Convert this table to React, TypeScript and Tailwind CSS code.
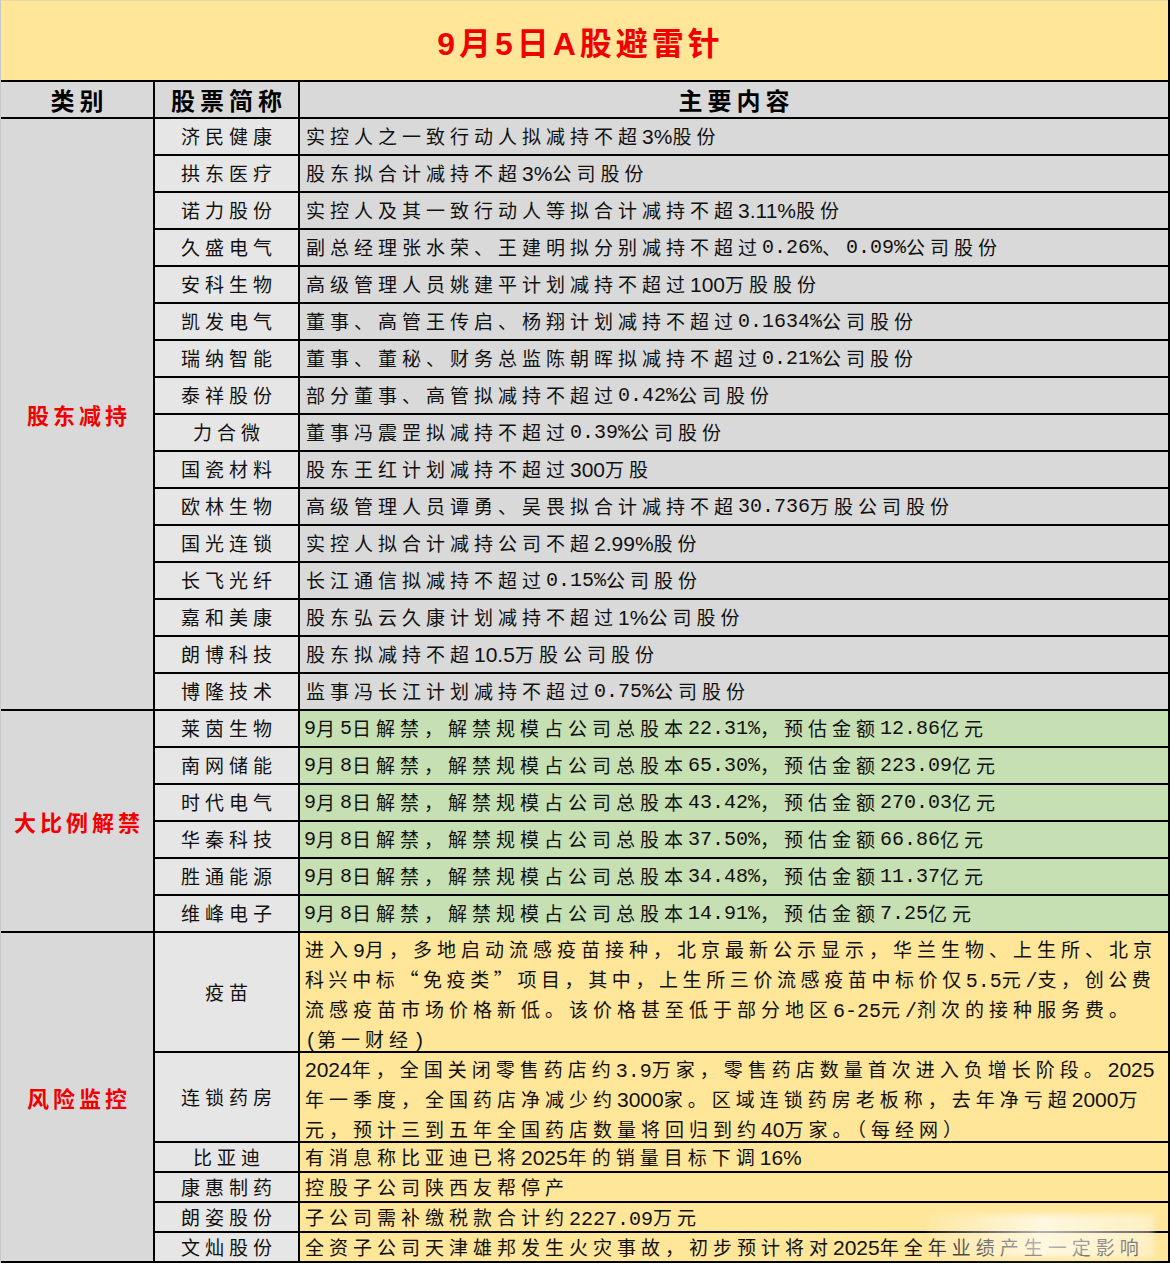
import React from 'react';

// ascii runs: narrow sans by default, mono (half-width look) when wide; {..} flips the style
function Txt({ t, wide = false }: { t: string; wide?: boolean }) {
    const chunks = t.split(/(\{[^}]*\})/);
    const out: React.ReactNode[] = [];
    chunks.forEach((c, ci) => {
        let w = wide;
        let s = c;
        if (c.startsWith('{') && c.endsWith('}')) {
            w = !wide;
            s = c.slice(1, -1);
        }
        s.split(/([\x20-\x7E]+)/).forEach((p, pi) => {
            if (!p) return;
            if (/^[\x20-\x7E]+$/.test(p)) {
                out.push(
                    <span
                        key={`${ci}-${pi}`}
                        className={
                            w
                                ? "font-['Liberation_Mono',monospace] text-[20px] tracking-normal"
                                : "font-['Liberation_Sans_Narrow','Liberation_Sans',sans-serif] text-[21px] tracking-normal"
                        }
                    >
                        {p}
                    </span>
                );
            } else {
                out.push(<span key={`${ci}-${pi}`}>{p}</span>);
            }
        });
    });
    return <>{out}</>;
}

const reduce: [string, string, boolean][] = [
    ['济民健康', '实控人之一致行动人拟减持不超3%股份', false],
    ['拱东医疗', '股东拟合计减持不超3%公司股份', false],
    ['诺力股份', '实控人及其一致行动人等拟合计减持不超3.11%股份', false],
    ['久盛电气', '副总经理张水荣、王建明拟分别减持不超过0.26%、0.09%公司股份', true],
    ['安科生物', '高级管理人员姚建平计划减持不超过100万股股份', false],
    ['凯发电气', '董事、高管王传启、杨翔计划减持不超过0.1634%公司股份', true],
    ['瑞纳智能', '董事、董秘、财务总监陈朝晖拟减持不超过0.21%公司股份', true],
    ['泰祥股份', '部分董事、高管拟减持不超过0.42%公司股份', true],
    ['力合微', '董事冯震罡拟减持不超过0.39%公司股份', true],
    ['国瓷材料', '股东王红计划减持不超过300万股', false],
    ['欧林生物', '高级管理人员谭勇、吴畏拟合计减持不超30.736万股公司股份', true],
    ['国光连锁', '实控人拟合计减持公司不超2.99%股份', false],
    ['长飞光纤', '长江通信拟减持不超过0.15%公司股份', true],
    ['嘉和美康', '股东弘云久康计划减持不超过1%公司股份', false],
    ['朗博科技', '股东拟减持不超10.5万股公司股份', false],
    ['博隆技术', '监事冯长江计划减持不超过0.75%公司股份', true],
];

const unlock: [string, string][] = [
    ['莱茵生物', '9月5日解禁，解禁规模占公司总股本22.31%，预估金额12.86亿元'],
    ['南网储能', '9月8日解禁，解禁规模占公司总股本65.30%，预估金额223.09亿元'],
    ['时代电气', '9月8日解禁，解禁规模占公司总股本43.42%，预估金额270.03亿元'],
    ['华秦科技', '9月8日解禁，解禁规模占公司总股本37.50%，预估金额66.86亿元'],
    ['胜通能源', '9月8日解禁，解禁规模占公司总股本34.48%，预估金额11.37亿元'],
    ['维峰电子', '9月8日解禁，解禁规模占公司总股本14.91%，预估金额7.25亿元'],
];

type Line = { t: string; tight?: boolean };

const risk: { name: string; lines: Line[]; h: string; wide: boolean }[] = [
    {
        name: '疫苗',
        h: 'h-[120px]',
        wide: true,
        lines: [
            { t: '进入9月，多地启动流感疫苗接种，北京最新公示显示，华兰生物、上生所、北京' },
            { t: '科兴中标“免疫类”项目，其中，上生所三价流感疫苗中标价仅5.5元/支，创公费', tight: true },
            { t: '流感疫苗市场价格新低。该价格甚至低于部分地区6-25元/剂次的接种服务费。' },
            { t: '(第一财经)' },
        ],
    },
    {
        name: '连锁药房',
        h: 'h-[90px]',
        wide: false,
        lines: [
            { t: '2024年，全国关闭零售药店约{3.9}万家，零售药店数量首次进入负增长阶段。2025' },
            { t: '年一季度，全国药店净减少约3000家。区域连锁药房老板称，去年净亏超2000万' },
            { t: '元，预计三到五年全国药店数量将回归到约40万家。（每经网）' },
        ],
    },
    { name: '比亚迪', h: 'h-[30px]', wide: false, lines: [{ t: '有消息称比亚迪已将2025年的销量目标下调16%' }] },
    { name: '康惠制药', h: 'h-[30px]', wide: false, lines: [{ t: '控股子公司陕西友帮停产' }] },
    { name: '朗姿股份', h: 'h-[30px]', wide: true, lines: [{ t: '子公司需补缴税款合计约2227.09万元' }] },
    { name: '文灿股份', h: 'h-[30px]', wide: false, lines: [{ t: '全资子公司天津雄邦发生火灾事故，初步预计将对2025年全年业绩产生一定影响' }] },
];

function Category({ label }: { label: string }) {
    return (
        <div className="w-[154px] shrink-0 border-r-2 border-b-2 border-black bg-[#D9D9D9] flex items-center justify-center">
            <span className="text-[22px] font-bold tracking-[4px] text-[#F00000] pl-[4px]">{label}</span>
        </div>
    );
}

export default function App() {
    return (
        <div className="w-[1170px] h-[1264px] bg-white overflow-hidden relative font-['Noto_Sans_CJK_SC',sans-serif] text-[19px] text-[#111]">
            <div className="w-[1170px] border-l border-[#c8c8c8] border-r-2 border-r-black">
                {/* title */}
                <div className="h-[82px] bg-[#FFE699] border-b-2 border-black border-t border-t-[#e8d9a0] flex items-center justify-center">
                    <span className="text-[32px] font-bold tracking-[4px] text-[#F00000] pt-[4px] mr-[8px]">
                        <span className="font-['Liberation_Sans',sans-serif]">9</span>月
                        <span className="font-['Liberation_Sans',sans-serif]">5</span>日
                        <span className="font-['Liberation_Sans',sans-serif]">A</span>股避雷针
                    </span>
                </div>

                {/* header */}
                <div className="h-[37px] flex border-b-2 border-black bg-[#D9D9D9] text-[24px] font-bold text-black">
                    <div className="w-[154px] shrink-0 border-r-2 border-black flex items-center justify-center tracking-[5px] pl-[5px]">类别</div>
                    <div className="w-[145px] shrink-0 border-r-2 border-black flex items-center justify-center tracking-[5px] pl-[5px]">股票简称</div>
                    <div className="flex-1 flex items-center justify-center tracking-[5px] pl-[5px]">主要内容</div>
                </div>

                {/* 股东减持 */}
                <div className="flex">
                    <Category label="股东减持" />
                    <div className="flex-1 flex flex-col">
                        {reduce.map(([name, text, wide]) => (
                            <div key={name} className="h-[37px] flex border-b-2 border-black">
                                <div className="w-[145px] shrink-0 border-r-2 border-black bg-[#E7E6E6] flex items-center justify-center tracking-[5px] pl-[5px]">
                                    {name}
                                </div>
                                <div className="flex-1 bg-[#D9D9D9] flex items-center pl-[6px] tracking-[5px] whitespace-nowrap overflow-hidden">
                                    <Txt t={text} wide={wide} />
                                </div>
                            </div>
                        ))}
                    </div>
                </div>

                {/* 大比例解禁 */}
                <div className="flex">
                    <Category label="大比例解禁" />
                    <div className="flex-1 flex flex-col">
                        {unlock.map(([name, text]) => (
                            <div key={name} className="h-[37px] flex border-b-2 border-black">
                                <div className="w-[145px] shrink-0 border-r-2 border-black bg-[#E7E6E6] flex items-center justify-center tracking-[5px] pl-[5px]">
                                    {name}
                                </div>
                                <div className="flex-1 bg-[#C6E0B4] flex items-center pl-[4px] tracking-[5px] whitespace-nowrap overflow-hidden">
                                    <Txt t={text} wide />
                                </div>
                            </div>
                        ))}
                    </div>
                </div>

                {/* 风险监控 */}
                <div className="flex">
                    <Category label="风险监控" />
                    <div className="flex-1 flex flex-col">
                        {risk.map(r => (
                            <div key={r.name} className={`${r.h} flex border-b-2 border-black`}>
                                <div className="w-[145px] shrink-0 border-r-2 border-black bg-[#E7E6E6] flex items-center justify-center tracking-[5px] pl-[5px]">
                                    {r.name}
                                </div>
                                <div className={`flex-1 bg-[#FFE699] flex flex-col pl-[5px] whitespace-nowrap ${r.lines.length > 1 ? 'pt-[1px]' : ''}`}>
                                    {r.lines.map((l, i) => (
                                        <div
                                            key={i}
                                            className={`${r.lines.length > 1 ? 'h-[30px] leading-[30px]' : 'h-[28px] leading-[28px]'} shrink-0 ${l.tight ? 'tracking-[4.6px]' : 'tracking-[5px]'}`}
                                        >
                                            <Txt t={l.t} wide={r.wide} />
                                        </div>
                                    ))}
                                </div>
                            </div>
                        ))}
                    </div>
                </div>
            </div>

            {/* blurred watermark over the last rows */}
            <div className="absolute left-[928px] top-[1214px] w-[226px] h-[44px] bg-gradient-to-r from-white/10 via-white/70 to-white/40 blur-[3px]" />
        </div>
    );
}
